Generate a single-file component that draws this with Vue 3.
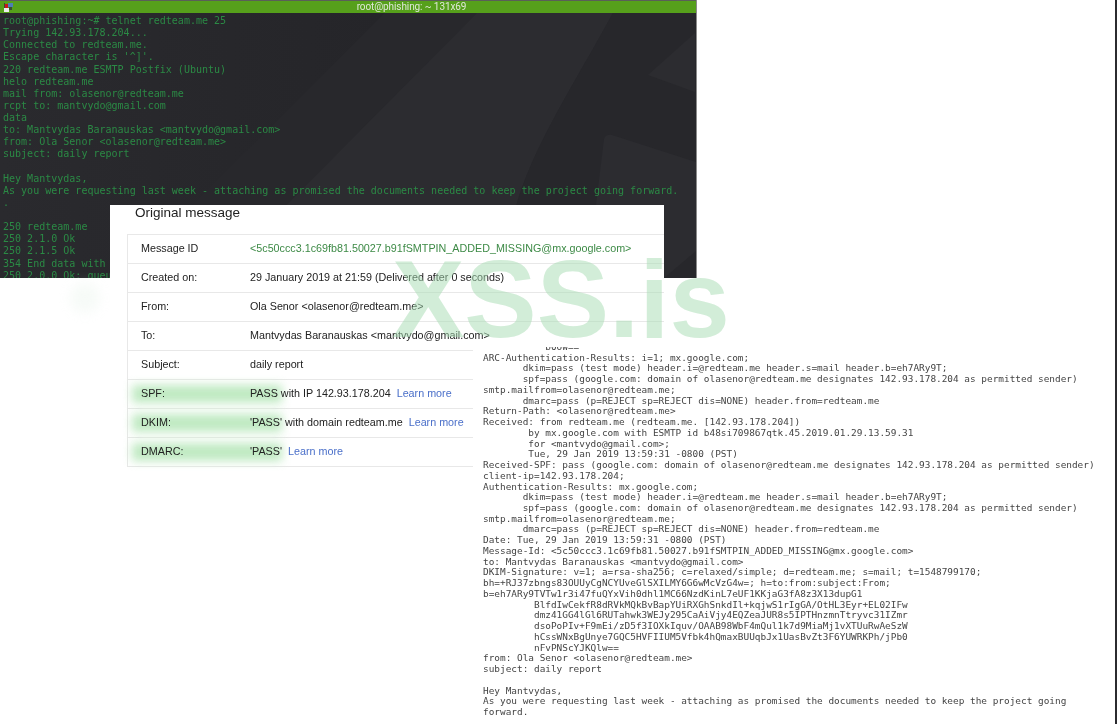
<script setup>
const terminalLines = [
  'root@phishing:~# telnet redteam.me 25',
  'Trying 142.93.178.204...',
  'Connected to redteam.me.',
  "Escape character is '^]'.",
  '220 redteam.me ESMTP Postfix (Ubuntu)',
  'helo redteam.me',
  'mail from: olasenor@redteam.me',
  'rcpt to: mantvydo@gmail.com',
  'data',
  'to: Mantvydas Baranauskas <mantvydo@gmail.com>',
  'from: Ola Senor <olasenor@redteam.me>',
  'subject: daily report',
  '',
  'Hey Mantvydas,',
  'As you were requesting last week - attaching as promised the documents needed to keep the project going forward.',
  '.',
  '',
  '250 redteam.me',
  '250 2.1.0 Ok',
  '250 2.1.5 Ok',
  '354 End data with',
  '250 2.0.0 Ok: queu'
]

const rows = [
  { label: 'Message ID', value: '<5c50ccc3.1c69fb81.50027.b91fSMTPIN_ADDED_MISSING@mx.google.com>', id: true },
  { label: 'Created on:', value: '29 January 2019 at 21:59 (Delivered after 0 seconds)' },
  { label: 'From:', value: 'Ola Senor <olasenor@redteam.me>' },
  { label: 'To:', value: 'Mantvydas Baranauskas <mantvydo@gmail.com>' },
  { label: 'Subject:', value: 'daily report' },
  { label: 'SPF:', value: 'PASS with IP 142.93.178.204', link: true, glow: true },
  { label: 'DKIM:', value: "'PASS' with domain redteam.me", link: true, glow: true },
  { label: 'DMARC:', value: "'PASS'", link: true, glow: true }
]

const raw = `           b0oW==
ARC-Authentication-Results: i=1; mx.google.com;
       dkim=pass (test mode) header.i=@redteam.me header.s=mail header.b=eh7ARy9T;
       spf=pass (google.com: domain of olasenor@redteam.me designates 142.93.178.204 as permitted sender)
smtp.mailfrom=olasenor@redteam.me;
       dmarc=pass (p=REJECT sp=REJECT dis=NONE) header.from=redteam.me
Return-Path: <olasenor@redteam.me>
Received: from redteam.me (redteam.me. [142.93.178.204])
        by mx.google.com with ESMTP id b48si709867qtk.45.2019.01.29.13.59.31
        for <mantvydo@gmail.com>;
        Tue, 29 Jan 2019 13:59:31 -0800 (PST)
Received-SPF: pass (google.com: domain of olasenor@redteam.me designates 142.93.178.204 as permitted sender)
client-ip=142.93.178.204;
Authentication-Results: mx.google.com;
       dkim=pass (test mode) header.i=@redteam.me header.s=mail header.b=eh7ARy9T;
       spf=pass (google.com: domain of olasenor@redteam.me designates 142.93.178.204 as permitted sender)
smtp.mailfrom=olasenor@redteam.me;
       dmarc=pass (p=REJECT sp=REJECT dis=NONE) header.from=redteam.me
Date: Tue, 29 Jan 2019 13:59:31 -0800 (PST)
Message-Id: <5c50ccc3.1c69fb81.50027.b91fSMTPIN_ADDED_MISSING@mx.google.com>
to: Mantvydas Baranauskas <mantvydo@gmail.com>
DKIM-Signature: v=1; a=rsa-sha256; c=relaxed/simple; d=redteam.me; s=mail; t=1548799170;
bh=+RJ37zbngs83OUUyCgNCYUveGlSXILMY6G6wMcVzG4w=; h=to:from:subject:From;
b=eh7ARy9TVTw1r3i47fuQYxVih0dhl1MC66NzdKinL7eUF1KKjaG3fA8z3X13dupG1
         BlfdIwCekfR8dRVkMQkBvBapYUiRXGhSnkdIl+kqjwS1rIgGA/OtHL3Eyr+EL02IFw
         dmz41GG4lGl6RUTahwk3WEJy295CaAiVjy4EQZeaJUR8s5IPTHnzmnTtryvc31IZmr
         dsoPoPIv+F9mEi/zD5f3IOXkIquv/OAAB98WbF4mQul1k7d9MiaMj1vXTUuRwAeSzW
         hCssWNxBgUnye7GQC5HVFIIUM5Vfbk4hQmaxBUUqbJx1UasBvZt3F6YUWRKPh/jPb0
         nFvPNScYJKQlw==
from: Ola Senor <olasenor@redteam.me>
subject: daily report

Hey Mantvydas,
As you were requesting last week - attaching as promised the documents needed to keep the project going
forward.`
</script>

<template>
  <div class="canvas">
    <section class="terminal">
      <header class="titlebar">
        <svg class="term-icon" width="14" height="13" viewBox="0 0 14 13">
          <rect x="5" y="4" width="3" height="4" fill="#c8161c" />
          <rect x="8" y="3" width="5" height="4" fill="#4f7fb5" />
          <rect x="4" y="8" width="5" height="4" fill="#eeeeee" />
          <rect x="9" y="7" width="3" height="3" fill="#39502f" />
          <rect x="4" y="3" width="1" height="5" fill="#39502f" />
        </svg>
        <span class="title">root@phishing: ~ 131x69</span>
      </header>
      <div class="term-body">
        <svg class="wallpaper" width="696" height="265" viewBox="0 0 696 265">
          <defs>
            <linearGradient id="wedge" x1="0" y1="0" x2="1" y2="0">
              <stop offset="0" stop-color="#2a2a2e" />
              <stop offset="1" stop-color="#252529" />
            </linearGradient>
          </defs>
          <rect width="696" height="265" fill="#28282c" />
          <path d="M0 0 L385 0 L120 265 L0 265Z" fill="url(#wedge)" />
          <path d="M477 0 L613 0 C575 70 535 130 517 190 L505 265 L214 265Z" fill="#2c2c30" />
          <path d="M613 0 L696 0 L696 265 L505 265 L517 190 C535 130 575 70 613 0Z" fill="#27272b" />
          <path d="M648 62 L695 20 L695 79Z" fill="#2c2c30" />
          <path d="M587 265 L604 126 Q606 121 612 122 L696 149 L696 238 L664 265Z" fill="#2c2c30" />
        </svg>
        <pre class="term-text"><template v-for="(line, i) in terminalLines" :key="i">{{ line }}
</template></pre>
      </div>
    </section>

    <div class="soft-dot"></div>

    <section class="card">
      <h2>Original message</h2>
      <div class="table">
        <div v-for="row in rows" :key="row.label" class="row">
          <span v-if="row.glow" class="glow"></span>
          <span class="label">{{ row.label }}</span>
          <span class="value" :class="{ id: row.id }">{{ row.value }}<a v-if="row.link" class="learn">Learn more</a></span>
        </div>
      </div>
    </section>

    <section class="raw">
      <pre>{{ raw }}</pre>
    </section>

    <div class="edge"></div>
    <div class="watermark">XSS.is</div>
  </div>
</template>

<style>
html, body { margin: 0; background: #fff; overflow: hidden; }
</style>

<style scoped>
.canvas { position: relative; width: 1117px; height: 724px; overflow: hidden; background: #fff; filter: blur(0.35px); }
.terminal { position: absolute; left: 0; top: 0; width: 696px; height: 278px; overflow: hidden; background: #2b2b2f; box-shadow: 1px 0 0 #8b8b8b; display: flex; flex-direction: column; }
.titlebar { height: 13px; flex: none; background: #56a01b; border-top: 1px solid #5a5f58; box-sizing: border-box; display: flex; align-items: center; justify-content: center; position: relative; }
.term-icon { position: absolute; left: 0; top: -1px; }
.title { font: 10px/12px "Roboto", sans-serif; color: #dfe8d8; margin-left: 127px; letter-spacing: -0.1px; }
.term-body { position: relative; flex: 1; }
.wallpaper { position: absolute; left: 0; top: 0; }
.term-text { position: relative; margin: 0; padding: 2px 0 0 3px; font: 10.03px/12.12px "DejaVu Sans Mono", monospace; color: #2b8a45; white-space: pre; }
.soft-dot { position: absolute; left: 70px; top: 283px; width: 30px; height: 30px; border-radius: 50%; background: #e3f1e6; filter: blur(6px); opacity: .3; }
.card { position: absolute; left: 110px; top: 205px; width: 554px; height: 270px; background: #fff; font-family: "Liberation Sans", Arial, sans-serif; }
.card h2 { margin: 0; position: absolute; left: 25px; top: 0; font-size: 13.5px; line-height: 15px; font-weight: 400; color: #222; }
.table { position: absolute; left: 17px; top: 29px; right: 0; border-left: 1px solid #e8e8e8; border-top: 1px solid #e8e8e8; }
.row { position: relative; box-sizing: border-box; height: 29px; padding-bottom: 3px; border-bottom: 1px solid #e8e8e8; display: flex; align-items: center; font-size: 10.76px; color: #222; }
.label { position: relative; width: 109px; margin-left: 13px; flex: none; }
.value { position: relative; white-space: nowrap; }
.value.id { color: #3d8a46; }
.learn { color: #4a6fc9; margin-left: 6px; }
.glow { position: absolute; left: 4px; top: 5px; width: 150px; height: 18px; background: #b5e6b8; filter: blur(5px); opacity: .85; }
.raw { position: absolute; left: 473px; top: 347px; width: 642px; height: 377px; background: #fff; overflow: hidden; }
.raw pre { margin: -5px 0 0 10px; font: 9.42px/10.74px "DejaVu Sans Mono", monospace; color: #444; white-space: pre; }
.edge { position: absolute; right: 0; top: 0; width: 2px; height: 724px; background: #2b2b2f; }
.watermark { position: absolute; left: 392px; top: 239px; font: 700 108.5px/122px "Liberation Sans", Arial, sans-serif; color: rgba(165, 219, 178, .5); white-space: nowrap; }
</style>
